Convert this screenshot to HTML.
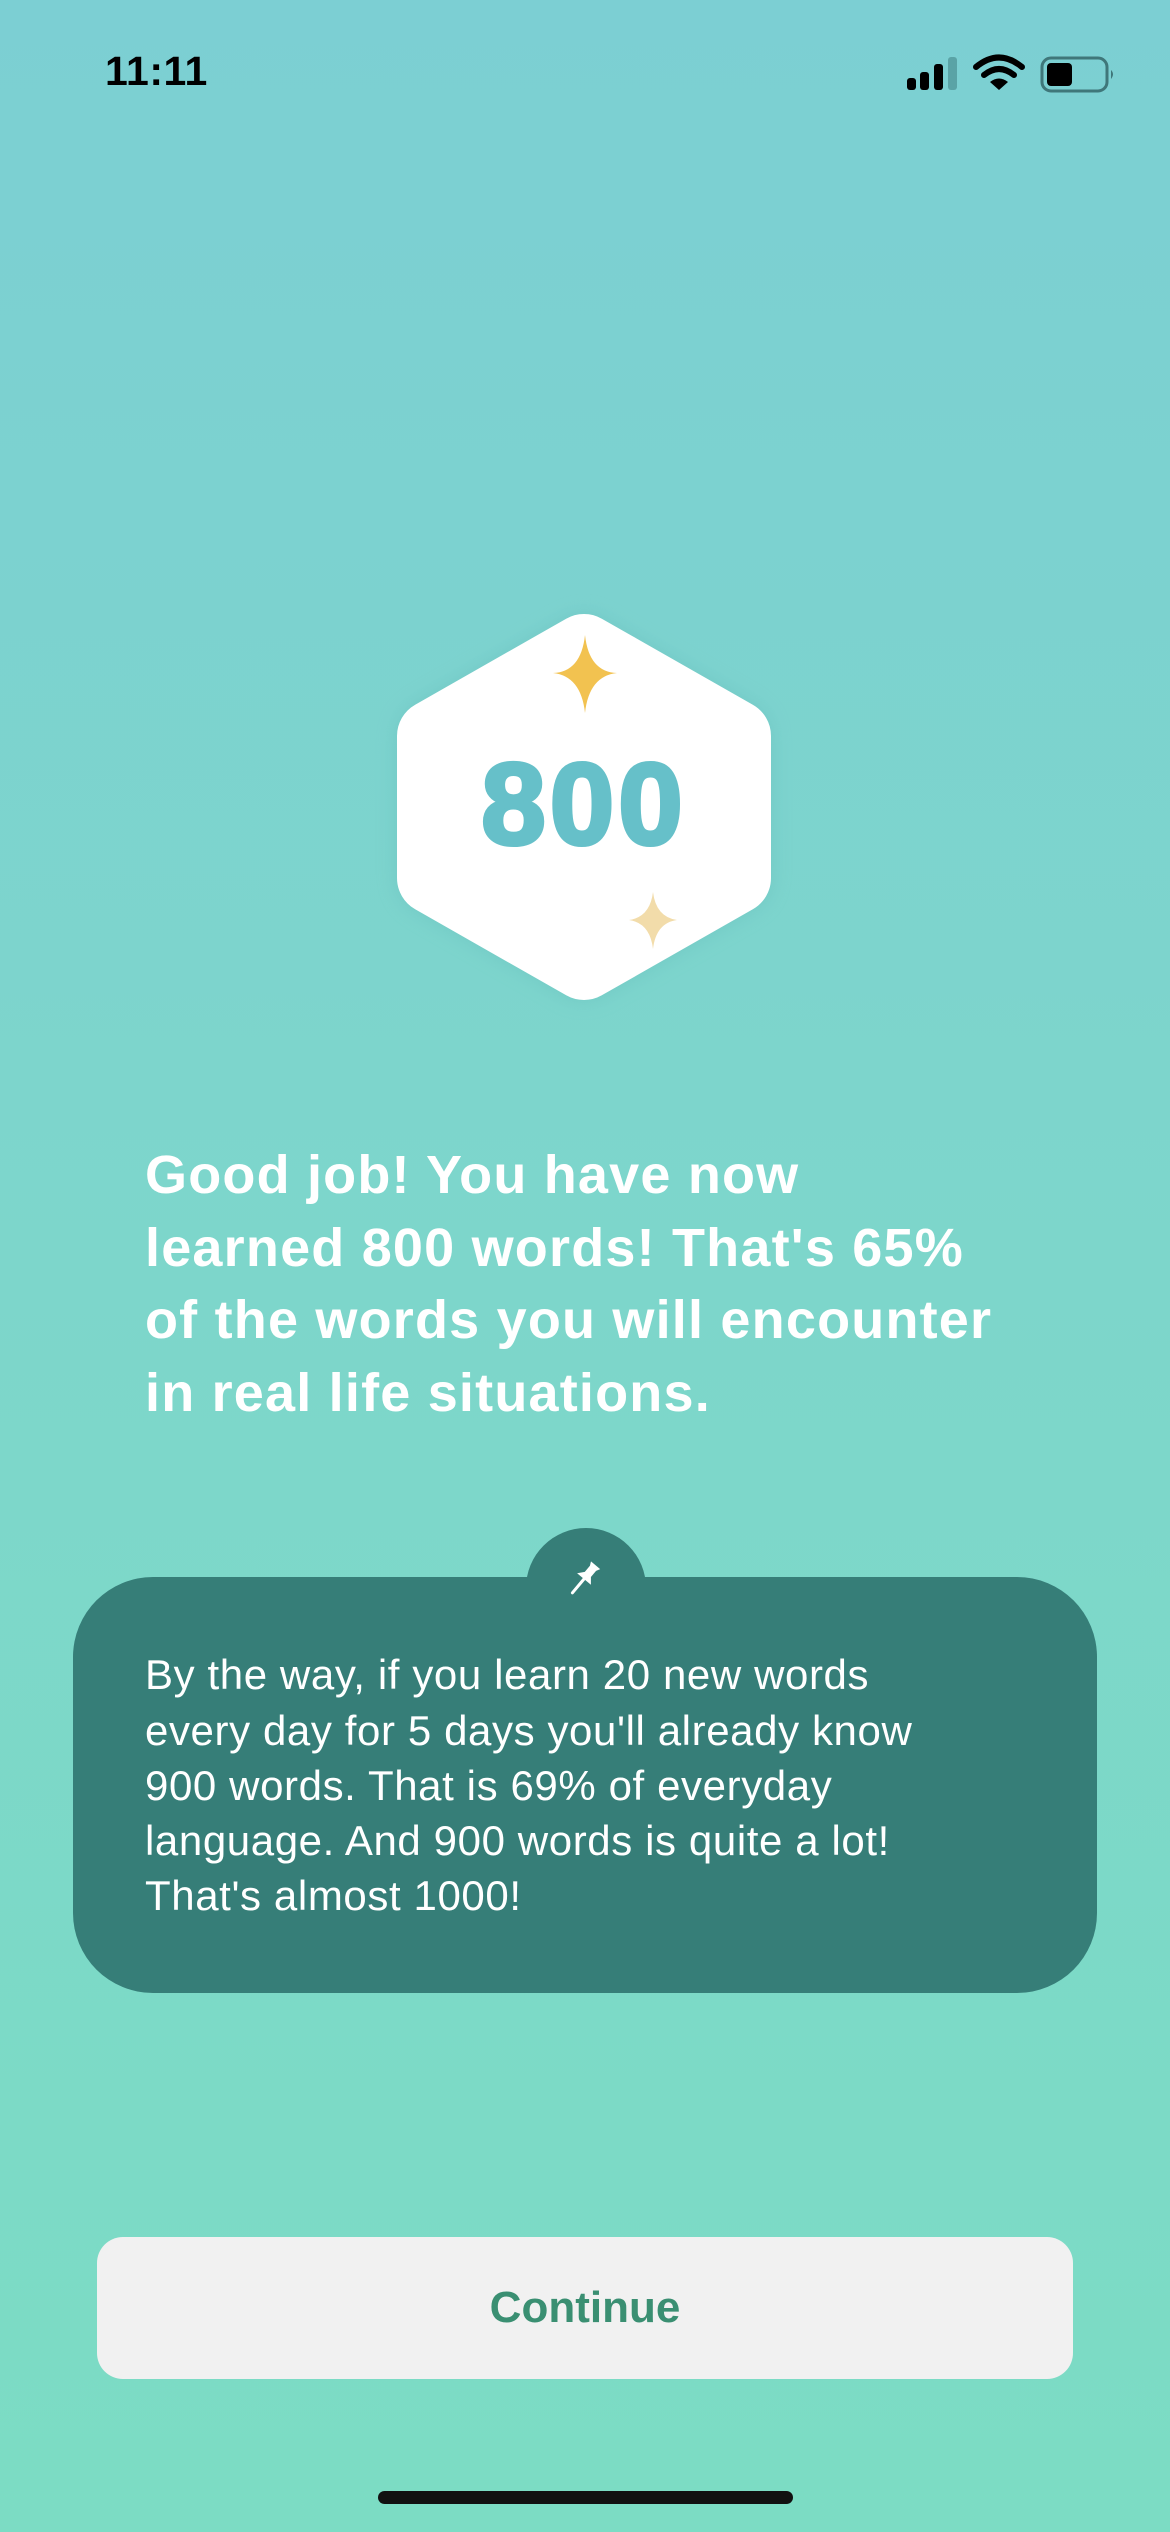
<!DOCTYPE html>
<html><head><meta charset="utf-8"><style>
*{margin:0;padding:0;box-sizing:border-box}
body{width:1170px;height:2532px;overflow:hidden;position:relative;background:linear-gradient(180deg,#7ccfd3 0%,#7dd6cb 50%,#7cdcc4 100%);font-family:"Liberation Sans",sans-serif}
.abs{position:absolute}
.h{left:145px;color:#fff;font-weight:bold;font-size:54px;white-space:nowrap;line-height:60px;letter-spacing:1.2px}
.b{left:145px;color:#fff;font-size:42px;white-space:nowrap;line-height:50px;letter-spacing:0.6px}
</style></head><body>
<div class="abs" style="left:105px;top:48px;font-size:41px;font-weight:bold;color:#000;letter-spacing:0.5px">11:11</div>
<svg class="abs" style="left:900px;top:50px" width="220" height="50" viewBox="900 50 220 50">
<rect x="907" y="78" width="9" height="12" rx="3" fill="#000"/>
<rect x="920" y="72" width="9" height="18" rx="3" fill="#000"/>
<rect x="934" y="64" width="9" height="26" rx="3" fill="#000"/>
<rect x="948" y="57" width="9" height="33" rx="3" fill="#5aa3a6"/>
<path d="M976 67 Q999 48 1022 67" stroke="#000" stroke-width="6" fill="none" stroke-linecap="round"/>
<path d="M984 75 Q999 63 1014 75" stroke="#000" stroke-width="6" fill="none" stroke-linecap="round"/>
<path d="M990 82 L999 90 L1008 82 Q999 75 990 82Z" fill="#000"/>
<rect x="1042" y="58" width="65" height="33" rx="9" fill="none" stroke="#3f777a" stroke-width="3"/>
<rect x="1047" y="63" width="25" height="23" rx="4" fill="#000"/>
<path d="M1111 70 Q1115 74 1111 79Z" fill="#3f777a"/>
</svg>
<svg class="abs" style="left:0;top:0" width="1170" height="1100">
<defs><filter id="s" x="-20%" y="-20%" width="140%" height="140%"><feGaussianBlur stdDeviation="10"/></filter></defs>
<polygon points="584,650 735,736 735,878 584,964 433,878 433,736" fill="#5fb3b3" opacity="0.35" stroke="#5fb3b3" stroke-width="72" stroke-linejoin="round" filter="url(#s)"/>
<polygon points="584,650 735,736 735,878 584,964 433,878 433,736" fill="#fff" stroke="#fff" stroke-width="72" stroke-linejoin="round"/>
<path d="M585 635 Q589 672 617 673 Q589 676 585 713 Q581 676 553 673 Q581 672 585 635Z" fill="#f2c250"/>
<path d="M653 892 Q656 917 677 920 Q656 923 653 949 Q650 923 629 920 Q650 917 653 892Z" fill="#f2dcaa"/>
<text x="584" y="844" text-anchor="middle" font-family="Liberation Sans" font-weight="bold" font-size="116" fill="#66c0c9" stroke="#66c0c9" stroke-width="4" letter-spacing="4">800</text>
</svg>
<div class="abs h" style="top:1145px">Good job! You have now</div>
<div class="abs h" style="top:1218px">learned 800 words! That's 65%</div>
<div class="abs h" style="top:1290px">of the words you will encounter</div>
<div class="abs h" style="top:1363px">in real life situations.</div>
<div class="abs" style="left:526px;top:1528px;width:120px;height:120px;border-radius:60px;background:#367e78"></div>
<div class="abs" style="left:73px;top:1577px;width:1024px;height:416px;border-radius:80px;background:#367e78"></div>
<svg class="abs" style="left:560px;top:1555px" width="48" height="48" viewBox="0 0 48 48">
<g transform="rotate(40 24 24)"><path d="M18 6 H30 L28 10 V18 L33 24 H15 L20 18 V10Z" fill="#fff"/><path d="M24 24 V42" stroke="#fff" stroke-width="3" stroke-linecap="round"/></g>
</svg>
<div class="abs b" style="top:1650px">By the way, if you learn 20 new words</div>
<div class="abs b" style="top:1706px">every day for 5 days you'll already know</div>
<div class="abs b" style="top:1761px">900 words. That is 69% of everyday</div>
<div class="abs b" style="top:1816px">language. And 900 words is quite a lot!</div>
<div class="abs b" style="top:1871px">That's almost 1000!</div>
<div class="abs" style="left:97px;top:2237px;width:976px;height:142px;border-radius:26px;background:#f1f1f1;color:#3a8f72;font-weight:bold;font-size:44px;text-align:center;line-height:142px">Continue</div>
<div class="abs" style="left:378px;top:2491px;width:415px;height:13px;border-radius:7px;background:#111"></div>
</body></html>
